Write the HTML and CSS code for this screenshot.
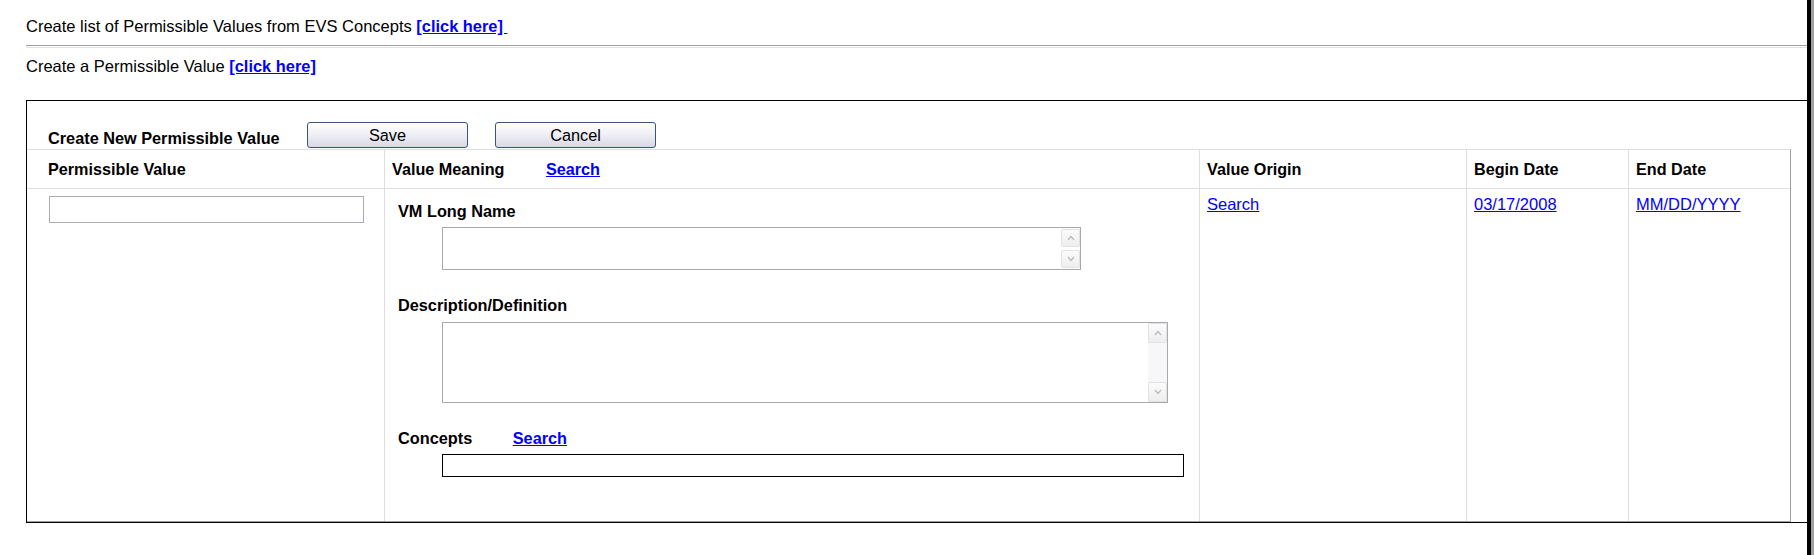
FILE: index.html
```html
<!DOCTYPE html>
<html lang="en">
<head>
<meta charset="utf-8">
<title>Create New Permissible Value</title>
<link rel="stylesheet" href="styles.css">
</head>
<body>
<div class="page">
  <main class="main">
    <p class="line line-first">Create list of Permissible Values from EVS Concepts <a class="link-bold" href="#">[click here]&nbsp;</a></p>
    <hr class="sep">
    <p class="line">Create a Permissible Value <a class="link-bold" href="#">[click here]</a></p>

    <section class="panel">
      <div class="toolbar">
        <span class="title">Create New Permissible Value</span>
        <button class="btn" type="button">Save</button>
        <button class="btn btn-cancel" type="button">Cancel</button>
      </div>

      <div class="grid">
        <div class="th col1">Permissible Value</div>
        <div class="th">Value Meaning <a class="link-bold head-search" href="#">Search</a></div>
        <div class="th">Value Origin</div>
        <div class="th">Begin Date</div>
        <div class="th last">End Date</div>

        <div class="td col1"><input class="pv-input" type="text"></div>
        <div class="td vm-cell">
          <div class="label">VM Long Name</div>
          <div class="ta ta-name">
            <textarea class="ta-text"></textarea>
            <div class="sb sb-small">
              <span class="sb-btn"><svg width="8" height="6" viewBox="0 0 8 6"><polyline points="1,5 4,1.5 7,5" fill="none" stroke="#b9b9b9" stroke-width="1.2"/></svg></span>
              <span class="sb-btn"><svg width="8" height="6" viewBox="0 0 8 6"><polyline points="1,1 4,4.5 7,1" fill="none" stroke="#b9b9b9" stroke-width="1.2"/></svg></span>
            </div>
          </div>

          <div class="label label-gap">Description/Definition</div>
          <div class="ta ta-desc">
            <textarea class="ta-text"></textarea>
            <div class="sb sb-track">
              <span class="sb-btn sb-btn-tall"><svg width="8" height="6" viewBox="0 0 8 6"><polyline points="1,5 4,1.5 7,5" fill="none" stroke="#b9b9b9" stroke-width="1.2"/></svg></span>
              <span class="sb-btn sb-btn-tall"><svg width="8" height="6" viewBox="0 0 8 6"><polyline points="1,1 4,4.5 7,1" fill="none" stroke="#b9b9b9" stroke-width="1.2"/></svg></span>
            </div>
          </div>

          <div class="label label-gap">Concepts <a class="link-bold concept-search" href="#">Search</a></div>
          <div class="concepts-box"></div>
        </div>
        <div class="td"><a class="link" href="#">Search</a></div>
        <div class="td"><a class="link" href="#">03/17/2008</a></div>
        <div class="td last"><a class="link" href="#">MM/DD/YYYY</a></div>
      </div>
    </section>
  </main>
  <div class="edge"></div>
</div>
</body>
</html>
```
FILE: styles.css
```css
html, body {
  margin: 0;
  padding: 0;
  background: #ffffff;
}

body {
  font-family: "Liberation Sans", Arial, sans-serif;
  color: #000000;
}

.page {
  display: flex;
  height: 555px;
  overflow: hidden;
}

.main {
  flex: 1 1 auto;
  padding: 17px 0 0 26px;
  min-width: 0;
}

.edge {
  flex: 0 0 8px;
  box-sizing: border-box;
  border-left: 4px solid #000000;
  border-right: 1px solid #ffffff;
  background: #a0a0a0;
}

.line {
  margin: 0;
  font-size: 16.5px;
  line-height: 19px;
  white-space: nowrap;
}

.link-bold {
  color: #0000ff;
  font-weight: bold;
  font-size: 16.4px;
  text-decoration: underline;
}

.link {
  color: #0000ff;
  font-size: 16.5px;
  text-decoration: underline;
}

.sep {
  margin: 9px 0 9px 0;
  height: 1px;
  border: 0;
  border-top: 1px solid #a0a0a0;
  border-bottom: 1px solid #e3e3e3;
  background: #ffffff;
}

.panel {
  margin-top: 24px;
  border: 1px solid #000000;
  border-right: 0;
}

.toolbar {
  display: flex;
  align-items: flex-end;
  padding: 21px 0 1px 21px;
}

.title {
  flex: 0 0 259px;
  font-weight: bold;
  font-size: 16.3px;
  line-height: 18px;
  margin-bottom: 1px;
  white-space: nowrap;
}

.btn {
  box-sizing: border-box;
  width: 161px;
  height: 26px;
  margin: 0;
  padding: 0;
  border: 1px solid #3a5674;
  border-radius: 3px;
  background: linear-gradient(to bottom, #ffffff 0%, #f0f0f6 45%, #d9d8e6 100%);
  font-family: "Liberation Sans", Arial, sans-serif;
  font-size: 16.3px;
  line-height: 18px;
  color: #000000;
}

.btn-cancel {
  margin-left: 27px;
}

.grid {
  box-sizing: border-box;
  width: 1764px;
  display: grid;
  grid-template-columns: 358px 815px 267px 162px 161px;
  grid-template-rows: 39px 332px;
  border-top: 1px solid #dedede;
  border-right: 1px solid #a0a0a0;
  border-bottom: 1px solid #a0a0a0;
}

.th,
.td {
  box-sizing: border-box;
  border-right: 1px solid #dedede;
}

.th.last,
.td.last {
  border-right: 0;
}

.th {
  border-bottom: 1px solid #dedede;
  padding: 10px 7px;
  font-weight: bold;
  font-size: 16.2px;
  line-height: 18px;
  white-space: nowrap;
}

.th .link-bold {
  font-size: 16.2px;
}

.th.col1 {
  padding-left: 21px;
}

.head-search {
  margin-left: 37px;
}

.td {
  padding: 6px 7px;
  font-size: 16.5px;
  line-height: 19px;
}

.td.col1 {
  padding: 7px 0 0 22px;
}

.pv-input {
  box-sizing: border-box;
  display: block;
  width: 315px;
  height: 27px;
  margin: 0;
  border: 1px solid #abadb3;
  background: #ffffff;
  outline: none;
}

.vm-cell {
  padding: 13px 0 0 13px;
}

.label {
  font-weight: bold;
  font-size: 16.3px;
  line-height: 18px;
  white-space: nowrap;
}

.label .link-bold {
  font-size: 16.3px;
}

.label-gap {
  margin-top: 26px;
}

.concept-search {
  margin-left: 36px;
}

.ta {
  box-sizing: border-box;
  display: flex;
  margin: 7px 0 0 44px;
  border: 1px solid #a9a9a9;
  background: #ffffff;
}

.ta-name {
  width: 639px;
  height: 43px;
}

.ta-desc {
  width: 726px;
  height: 81px;
  margin-top: 8px;
}

.ta-text {
  flex: 1 1 auto;
  margin: 0;
  padding: 0;
  border: 0;
  resize: none;
  outline: none;
  overflow: hidden;
  background: #ffffff;
}

.sb {
  flex: 0 0 19px;
  display: flex;
  flex-direction: column;
  justify-content: space-between;
}

.sb-small {
  padding: 1px 0;
}

.sb-track {
  background: #f7f7fa;
}

.sb-btn {
  box-sizing: border-box;
  height: 18px;
  display: flex;
  align-items: center;
  justify-content: center;
  border: 1px solid #e1e2e8;
  border-radius: 2px;
  background: linear-gradient(to bottom, #fbfbfb 0%, #eeeeee 100%);
}

.sb-btn-tall {
  height: 20px;
}

.concepts-box {
  box-sizing: border-box;
  width: 742px;
  height: 23px;
  margin: 7px 0 0 44px;
  border: 1px solid #000000;
  background: #ffffff;
}
```
